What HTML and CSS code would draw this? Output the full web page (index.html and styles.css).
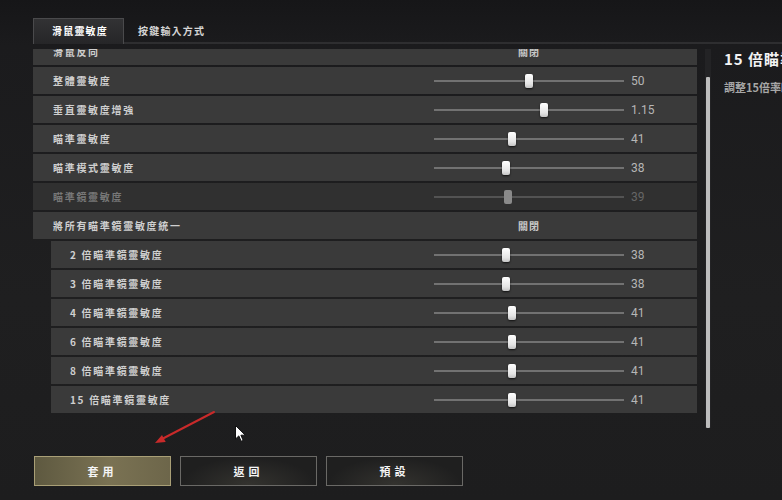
FILE: index.html
```html
<!DOCTYPE html>
<html lang="zh-Hant">
<head>
<meta charset="utf-8">
<title>滑鼠靈敏度</title>
<link rel="stylesheet" href="styles.css">
</head>
<body>
<div class="screen">
  <div class="tabs">
    <div class="tab active">滑鼠靈敏度</div>
    <div class="tab">按鍵輸入方式</div>
  </div>
  <div class="main">
    <div class="list-col">
      <div class="viewport">
        <div class="list">
          <div class="row">
            <div class="label">滑鼠反向</div>
            <div class="control"><div class="toggle">關閉</div><div class="value"></div></div>
          </div>
          <div class="row">
            <div class="label">整體靈敏度</div>
            <div class="control"><div class="track"><div class="thumb" style="left:50%"></div></div><div class="value">50</div></div>
          </div>
          <div class="row">
            <div class="label">垂直靈敏度增強</div>
            <div class="control"><div class="track"><div class="thumb" style="left:58%"></div></div><div class="value">1.15</div></div>
          </div>
          <div class="row">
            <div class="label">瞄準靈敏度</div>
            <div class="control"><div class="track"><div class="thumb" style="left:41%"></div></div><div class="value">41</div></div>
          </div>
          <div class="row">
            <div class="label">瞄準模式靈敏度</div>
            <div class="control"><div class="track"><div class="thumb" style="left:38%"></div></div><div class="value">38</div></div>
          </div>
          <div class="row disabled">
            <div class="label">瞄準鏡靈敏度</div>
            <div class="control"><div class="track"><div class="thumb" style="left:39%"></div></div><div class="value">39</div></div>
          </div>
          <div class="row">
            <div class="label">將所有瞄準鏡靈敏度統一</div>
            <div class="control"><div class="toggle">關閉</div><div class="value"></div></div>
          </div>
          <div class="row sub">
            <div class="label">2 倍瞄準鏡靈敏度</div>
            <div class="control"><div class="track"><div class="thumb" style="left:38%"></div></div><div class="value">38</div></div>
          </div>
          <div class="row sub">
            <div class="label">3 倍瞄準鏡靈敏度</div>
            <div class="control"><div class="track"><div class="thumb" style="left:38%"></div></div><div class="value">38</div></div>
          </div>
          <div class="row sub">
            <div class="label">4 倍瞄準鏡靈敏度</div>
            <div class="control"><div class="track"><div class="thumb" style="left:41%"></div></div><div class="value">41</div></div>
          </div>
          <div class="row sub">
            <div class="label">6 倍瞄準鏡靈敏度</div>
            <div class="control"><div class="track"><div class="thumb" style="left:41%"></div></div><div class="value">41</div></div>
          </div>
          <div class="row sub">
            <div class="label">8 倍瞄準鏡靈敏度</div>
            <div class="control"><div class="track"><div class="thumb" style="left:41%"></div></div><div class="value">41</div></div>
          </div>
          <div class="row sub">
            <div class="label">15 倍瞄準鏡靈敏度</div>
            <div class="control"><div class="track"><div class="thumb" style="left:41%"></div></div><div class="value">41</div></div>
          </div>
        </div>
      </div>
      <div class="scrollbar"><div class="scroll-thumb"></div></div>
    </div>
    <div class="info">
      <h2 class="info-title">15 倍瞄準鏡靈敏度</h2>
      <p class="info-desc">調整15倍率瞄準鏡的靈敏度</p>
    </div>
  </div>
  <div class="buttons">
    <div class="btn primary">套用</div>
    <div class="btn">返回</div>
    <div class="btn">預設</div>
  </div>
  <svg class="arrow" width="782" height="500" viewBox="0 0 782 500">
    <line x1="214" y1="412" x2="162" y2="439" stroke="#c92a2a" stroke-width="2" stroke-linecap="round"/>
    <polygon points="155,443 165.7,442 162,434.9" fill="#c92a2a"/>
  </svg>
  <svg class="cursor" width="12" height="18" viewBox="0 0 12 18">
    <path d="M0.5 0.5 L0.5 14 L3.8 10.9 L6.2 16.3 L8.2 15.4 L5.9 10.2 L10.3 10.2 Z" fill="#ffffff" stroke="#111" stroke-width="1"/>
  </svg>
</div>
</body>
</html>
```

FILE: styles.css
```css
html, body {
  margin: 0;
  padding: 0;
  background: #1c1c1e;
  overflow: hidden;
}

body {
  width: 782px;
  height: 500px;
  font-family: "Noto Sans CJK TC", "Noto Sans", sans-serif;
}

.screen {
  position: relative;
  width: 782px;
  height: 500px;
  background: linear-gradient(180deg, #161618 0px, #1b1b1d 45px, #1f1f20 300px, #1d1d1e 500px);
}

/* Tabs */
.tabs {
  display: flex;
  align-items: flex-end;
  margin-left: 33px;
  padding-top: 18px;
  height: 24px;
  border-bottom: 2px solid #2e2e30;
}

.tab {
  height: 24px;
  box-sizing: border-box;
  display: flex;
  align-items: center;
  font-size: 10px;
  font-weight: 700;
  letter-spacing: 1.2px;
  color: #d4d4d4;
  padding: 0 14px;
}

.tab.active {
  width: 91px;
  height: 26px;
  margin-bottom: -2px;
  padding: 0 0 2px 18px;
  color: #ffffff;
  border: 1px solid #4a4a4c;
  border-bottom: none;
  background: linear-gradient(180deg, #323234 0%, #262628 100%);
}

/* Main */
.main {
  display: flex;
  margin-top: 5px;
}

.list-col {
  display: flex;
  padding-left: 33px;
  gap: 8px;
}

.viewport {
  width: 664px;
  height: 366px;
  overflow: hidden;
}

.list {
  display: flex;
  flex-direction: column;
  gap: 2px;
  margin-top: -11px;
}

.row {
  height: 27px;
  flex: 0 0 27px;
  display: flex;
  align-items: center;
  background: #3a3a3a;
  padding: 0 26px 0 20px;
}

.row.sub {
  margin-left: 18px;
  padding-left: 19px;
}

.row.disabled {
  background: #303030;
}

.label {
  flex: 1;
  font-size: 10px;
  font-weight: 700;
  letter-spacing: 1.7px;
  color: #cfcfcf;
  white-space: nowrap;
}

.row.disabled .label {
  color: #777777;
}

.control {
  display: flex;
  align-items: center;
  gap: 7px;
  width: 237px;
}

.track {
  position: relative;
  width: 190px;
  height: 2px;
  background: #727272;
}

.row.disabled .track {
  background: #535353;
}

.thumb {
  position: absolute;
  top: 50%;
  width: 8px;
  height: 14px;
  transform: translate(-50%, -50%);
  background: linear-gradient(180deg, #ffffff 0%, #e4e4e4 70%, #c4c4c4 100%);
  border-radius: 2px;
  box-shadow: 0 1px 2px rgba(0, 0, 0, 0.7);
}

.row.disabled .thumb {
  background: #8a8a8a;
  box-shadow: none;
}

.value {
  width: 40px;
  font-family: Roboto, "Liberation Sans", sans-serif;
  font-size: 12px;
  color: #b6b6b6;
}

.row.disabled .value {
  color: #666666;
}

.toggle {
  width: 190px;
  text-align: center;
  font-size: 10px;
  font-weight: 700;
  letter-spacing: 1px;
  color: #c8c8c8;
}

/* Scrollbar */
.scrollbar {
  width: 6px;
  height: 379px;
  background: #232325;
  display: flex;
  flex-direction: column;
}

.scroll-thumb {
  margin: 28px 0 0 1px;
  width: 4px;
  height: 351px;
  background: #bdbdbd;
  border-radius: 1px;
}

/* Info panel */
.info {
  margin-left: 13px;
  white-space: nowrap;
}

.info-title {
  margin: 0;
  font-size: 15px;
  line-height: 20px;
  font-weight: 700;
  letter-spacing: 1px;
  color: #f2f2f2;
}

.info-desc {
  margin: 10px 0 0;
  font-size: 11px;
  line-height: 16px;
  font-weight: 700;
  color: #a6a6a6;
}

/* Buttons */
.buttons {
  display: flex;
  gap: 9px;
  padding-left: 34px;
  margin-top: 28px;
}

.btn {
  width: 137px;
  height: 30px;
  box-sizing: border-box;
  display: flex;
  align-items: center;
  justify-content: center;
  font-size: 11px;
  font-weight: 700;
  letter-spacing: 4px;
  color: #f4f4f4;
  border: 1px solid #6a6966;
  background: radial-gradient(ellipse at 50% 100%, #34332f 0%, #1f1f1f 70%);
}

.btn.primary {
  border-color: #a99f76;
  background: linear-gradient(90deg, #5e5940 0%, #7a7253 55%, #6d664a 100%);
}

/* Overlays */
.arrow {
  position: absolute;
  left: 0;
  top: 0;
  pointer-events: none;
}

.cursor {
  position: absolute;
  left: 235px;
  top: 425px;
  pointer-events: none;
}
```
